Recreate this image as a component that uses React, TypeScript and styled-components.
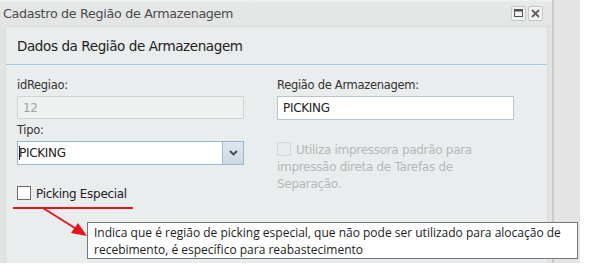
import React from "react";
import styled, { createGlobalStyle } from "styled-components";

const Global = createGlobalStyle`
  html, body { margin: 0; padding: 0; background: #ffffff; }
  body { font-family: Tahoma, "DejaVu Sans", sans-serif; }
`;

const Stage = styled.div`
  position: relative;
  width: 580px;
  height: 263px;
  background: #e4e4e4;
  overflow: hidden;
`;

const Window = styled.div`
  width: 554px;
  height: 263px;
  display: flex;
  flex-direction: column;
  background: #e2e4e4;
  border-right: 2px solid #c9cbcb;
  box-sizing: border-box;
`;

const TitleBar = styled.div`
  height: 26px;
  flex: none;
  display: flex;
  align-items: center;
  justify-content: space-between;
  padding: 0 9px 0 3px;
  background: linear-gradient(#f0f1f1 0px, #e6e8e8 3px, #e3e5e5 100%);
  font-family: "DejaVu Sans", sans-serif;
  font-size: 12.7px;
  letter-spacing: -0.3px;
  color: #4a4a4a;
`;

const Tools = styled.div`
  display: flex;
  gap: 2px;
`;

const ToolButton = styled.div`
  width: 13px;
  height: 13px;
  border: 1px solid #c4c8c8;
  border-radius: 2px;
  background: #f2f3f3;
  display: flex;
  align-items: center;
  justify-content: center;
`;

const Panel = styled.div`
  flex: 1;
  margin: 0 4px 0 5px;
  background: #eaeded;
  border: 1px solid #d8dcdc;
  border-bottom: none;
  display: flex;
  flex-direction: column;
`;

const PanelHeader = styled.div`
  height: 37px;
  display: flex;
  align-items: center;
  padding-left: 11px;
  border-bottom: 1px solid #a6c8ec;
  font-family: "DejaVu Sans", sans-serif;
  font-size: 13.5px;
  letter-spacing: -0.4px;
  color: #222;
`;

const Form = styled.div`
  display: grid;
  grid-template-columns: 227px 237px;
  column-gap: 33px;
  padding: 12px 11px 0;
`;

const Column = styled.div`
  display: flex;
  flex-direction: column;
`;

const Label = styled.div<{ $gap?: number }>`
  font-family: "DejaVu Sans", sans-serif;
  font-size: 11.5px;
  letter-spacing: -0.3px;
  line-height: 16px;
  color: #333;
  margin-top: ${(p) => p.$gap ?? 0}px;
  margin-bottom: 3px;
`;

const TextBox = styled.div<{ $disabled?: boolean; $h?: number }>`
  height: ${(p) => p.$h ?? 23}px;
  box-sizing: border-box;
  border: 1px solid ${(p) => (p.$disabled ? "#d0d4d6" : "#b9c3cc")};
  background: ${(p) => (p.$disabled ? "#eff1f1" : "#ffffff")};
  color: ${(p) => (p.$disabled ? "#a0a4a6" : "#222")};
  font-family: "DejaVu Sans", sans-serif;
  font-size: 12px;
  letter-spacing: -0.3px;
  display: flex;
  align-items: center;
  padding-left: 5px;
`;

const Select = styled.div`
  height: 24px;
  box-sizing: border-box;
  border: 1px solid #98b6d6;
  background: #fff;
  display: flex;
  font-family: "DejaVu Sans", sans-serif;
  font-size: 12px;
  letter-spacing: -0.3px;
  color: #222;
`;

const SelectValue = styled.div`
  flex: 1;
  display: flex;
  align-items: center;
  padding-left: 1px;
`;

const Caret = styled.span`
  display: inline-block;
  width: 1px;
  height: 14px;
  background: #222;
  margin-right: -1px;
`;

const Trigger = styled.div`
  width: 20px;
  border-left: 1px solid #a3bdd6;
  background: linear-gradient(#dfe6ee, #cfd9e3);
  display: flex;
  align-items: center;
  justify-content: center;
`;

const CheckRow = styled.div<{ $gap: number; $disabled?: boolean }>`
  margin-top: ${(p) => p.$gap}px;
  font-family: "DejaVu Sans", sans-serif;
  font-size: 12px;
  letter-spacing: -0.3px;
  line-height: 17px;
  color: ${(p) => (p.$disabled ? "#b4b8ba" : "#222")};
`;

const Box = styled.span<{ $disabled?: boolean }>`
  display: inline-block;
  width: 14px;
  height: 14px;
  box-sizing: border-box;
  border: 1px solid ${(p) => (p.$disabled ? "#d4d8da" : "#6e6e6e")};
  background: ${(p) => (p.$disabled ? "#e8ebeb" : "#ffffff")};
  vertical-align: -2px;
  margin-right: 5px;
`;

const Mark = styled.div`
  position: absolute;
  left: 13px;
  top: 207px;
  width: 120px;
  height: 2px;
  background: #e8141c;
`;

const Arrow = styled.svg`
  position: absolute;
  left: 40px;
  top: 206px;
`;

const Tip = styled.div`
  position: absolute;
  left: 87px;
  top: 222px;
  width: 491px;
  height: 37px;
  box-sizing: border-box;
  border: 1px solid #767676;
  background: #fff;
  padding: 1px 0 0 6px;
  font-family: "Open Sans", sans-serif;
  font-size: 12px;
  line-height: 17px;
  color: #222;
  white-space: nowrap;
`;

export default function App() {
  return (
    <>
      <Global />
      <Stage>
        <Window>
          <TitleBar>
            <span>Cadastro de Região de Armazenagem</span>
            <Tools>
              <ToolButton>
                <svg width="9" height="8" viewBox="0 0 9 8">
                  <rect x="0.5" y="0.5" width="8" height="7" fill="none" stroke="#505050" />
                  <rect x="0" y="0" width="9" height="2.5" fill="#505050" />
                </svg>
              </ToolButton>
              <ToolButton>
                <svg width="9" height="9" viewBox="0 0 9 9">
                  <path d="M1 1 L8 8 M8 1 L1 8" stroke="#606060" strokeWidth="1.8" />
                </svg>
              </ToolButton>
            </Tools>
          </TitleBar>
          <Panel>
            <PanelHeader>Dados da Região de Armazenagem</PanelHeader>
            <Form>
              <Column>
                <Label>idRegiao:</Label>
                <TextBox $disabled>12</TextBox>
                <Label $gap={3}>Tipo:</Label>
                <Select>
                  <SelectValue>
                    <Caret />PICKING
                  </SelectValue>
                  <Trigger>
                    <svg width="9" height="6" viewBox="0 0 9 6">
                      <path d="M1 1 L4.5 4.5 L8 1" fill="none" stroke="#404850" strokeWidth="1.8" />
                    </svg>
                  </Trigger>
                </Select>
                <CheckRow $gap={21}>
                  <Box />Picking Especial
                </CheckRow>
              </Column>
              <Column>
                <Label>Região de Armazenagem:</Label>
                <TextBox $h={24}>PICKING</TextBox>
                <CheckRow $gap={22} $disabled>
                  <Box $disabled />Utiliza impressora padrão para impressão direta de Tarefas de Separação.
                </CheckRow>
              </Column>
            </Form>
          </Panel>
        </Window>
        <Mark />
        <Arrow width="50" height="34" viewBox="0 0 50 34">
          <line x1="3" y1="2" x2="38" y2="24" stroke="#e8141c" strokeWidth="2" />
          <polygon points="47,30 31,27 38,17" fill="#e8141c" />
        </Arrow>
        <Tip>
          Indica que é região de picking especial, que não pode ser utilizado para alocação de
          <br />
          recebimento, é específico para reabastecimento
        </Tip>
      </Stage>
    </>
  );
}
